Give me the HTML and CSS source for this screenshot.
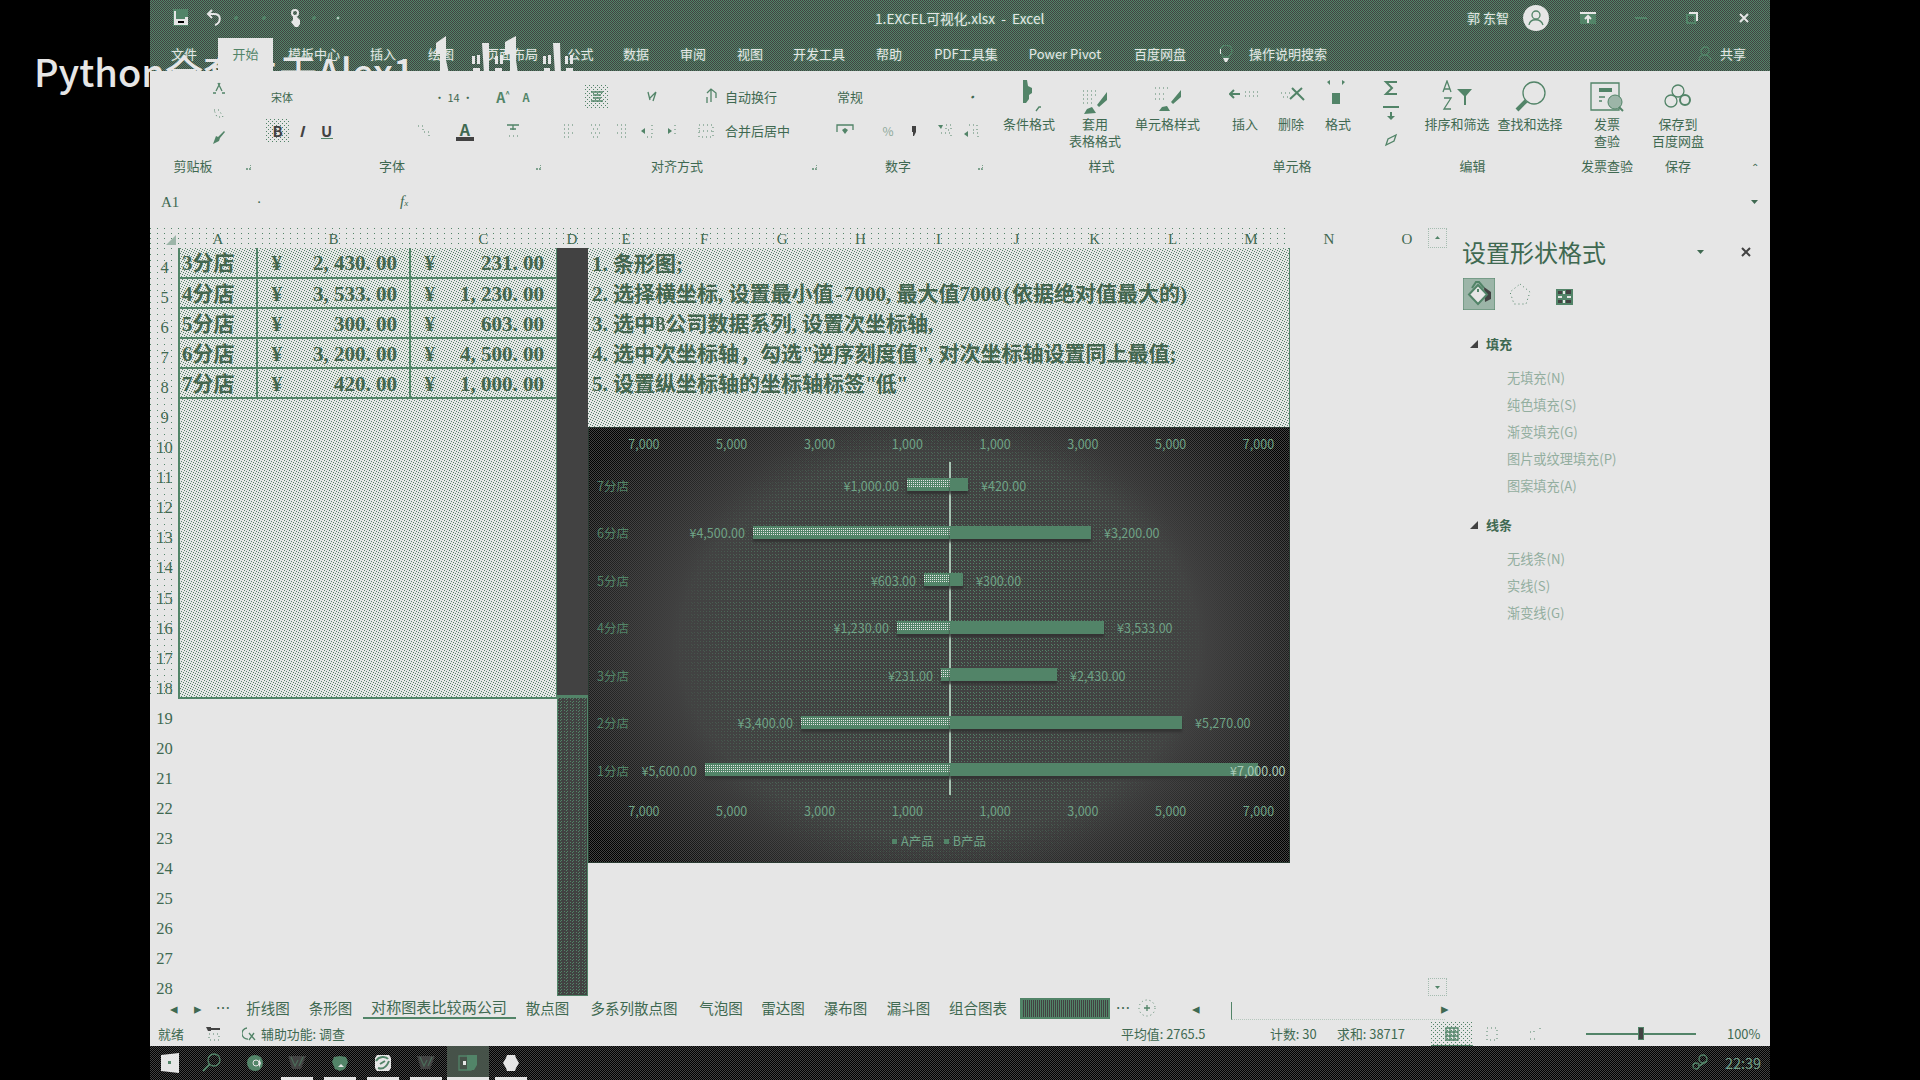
FILE: index.html
```html
<!DOCTYPE html>
<html lang="zh-CN">
<head>
<meta charset="utf-8">
<title>1.EXCEL可视化.xlsx - Excel</title>
<link rel="stylesheet" href="styles.css">
</head>
<body>
<div class="watermark">Python全套关于Alex1
<svg class="marks" width="150" height="40" viewBox="430 34 150 40"><path d="M436 43L446 36L446 60L449 74H440V54L436 55ZM482 43H489V74H484ZM505 42L516 36V60L518 74H510V54L505 55ZM553 43H560L561 74H555ZM472 56h3v8h-3zM477 55h3v9h-3zM495 56h3v8h-3zM500 55h3v9h-3zM543 56h3v8h-3zM548 55h3v9h-3zM565 56h3v8h-3zM570 55h3v9h-3zM473 68h7v6h-7zM495 68h7v6h-7zM544 68h6v6h-6zM566 68h7v6h-7z"/></svg>
</div>
<div class="app">
  <header class="titlebar">
    <div class="quick">
      <svg width="18" height="18" viewBox="0 0 18 18"><path class="g" d="M1 0h15v17H1z"/><path class="w" d="M2 2h2v8h9V8h3v8H2z"/><path class="k" d="M6 12h6v2H6z"/></svg>
      <svg width="16" height="18" viewBox="0 0 16 18"><path class="sw" d="M6 1L2 5l4 4M2 5h6c8 0 7 9 1 11"/></svg>
      <b></b><b></b>
      <svg width="14" height="18" viewBox="0 0 14 18"><circle class="sw" cx="5" cy="4" r="3"/><path class="w" d="M3 7h3l4 4v4l-2 3H5l-4-5 2-2z"/></svg>
      <b></b><b class="lit"></b>
    </div>
    <div class="doc">1.EXCEL可视化.xlsx&nbsp; -&nbsp; Excel</div>
    <div class="winbtns">
      <span class="user">郭 东智</span>
      <svg width="28" height="28" viewBox="0 0 28 28"><circle class="w" cx="14" cy="14" r="13"/><circle class="sg" cx="14" cy="11" r="4"/><path class="sg" d="M7 21c1-7 12-7 14 0"/></svg>
      <svg width="18" height="14" viewBox="0 0 18 14"><path class="g" d="M1 1h16v12H1z"/><path class="sw" d="M1 2h16M9 12V6M6 8l3-3 3 3"/></svg>
      <svg width="12" height="14" viewBox="0 0 12 14"><path class="sg2" d="M0 7h12"/></svg>
      <svg width="14" height="14" viewBox="0 0 14 14"><path class="sg2" d="M2 4h8v8H2z"/><path class="sw" d="M4 2h8v8"/></svg>
      <svg width="14" height="14" viewBox="0 0 14 14"><path class="sw" d="M3 3l8 8M11 3l-8 8"/></svg>
    </div>
  </header>
  <nav class="tabs">
    <span>文件</span><span class="on">开始</span><span>模板中心</span><span>插入</span><span>绘图</span><span>页面布局</span><span>公式</span><span>数据</span><span>审阅</span><span>视图</span><span>开发工具</span><span>帮助</span><span>PDF工具集</span><span>Power Pivot</span><span>百度网盘</span>
    <svg width="14" height="18" viewBox="0 0 14 18"><path class="sg" d="M4 12c0-3-3-3-3-6a6 6 0 0 1 12 0c0 3-3 3-3 6z"/><path class="w" d="M4 13h6l-2 4H6zM1 4h1v5H1z"/></svg>
    <span class="tell">操作说明搜索</span>
    <span class="share"><svg width="14" height="16" viewBox="0 0 14 16"><circle class="sg" cx="7" cy="5" r="4"/><path class="sg" d="M1 15c0-8 12-8 12 0"/></svg>共享</span>
  </nav>

  <section class="ribbon">
    <div class="grp clip">
      <div class="stack">
        <svg width="14" height="14" viewBox="0 0 14 14"><path class="sg" d="M6 1l4 8M8 1L4 9M1 11h3M10 11h3"/></svg>
        <svg width="12" height="10" viewBox="0 0 12 10"><path class="dotl" d="M1 1h5l4 7H4z"/></svg>
        <svg width="14" height="14" viewBox="0 0 14 14"><path class="g" d="M12 0L6 6 4 5 1 13l6-3 1-3 5-6z"/></svg>
      </div>
      <div class="cap">剪贴板</div><i class="launch"></i>
    </div>
    <div class="grp font">
      <div class="r r1"><span class="sm">宋体</span><span class="sm size">· 14 ·</span><span class="aa">A<sup>^</sup></span><span class="aa s">A</span></div>
      <div class="r r2"><span class="bold">B</span><span class="ital">I</span><span class="und">U</span>
        <svg width="14" height="14" viewBox="0 0 14 14"><path class="dotl" d="M1 2h5v6h6v5"/></svg>
        <span class="fc">A</span>
        <svg width="16" height="16" viewBox="0 0 16 16"><path class="sg" d="M2 2h12M8 2v5M5 6h6"/><path class="dotl" d="M4 13h9"/></svg></div>
      <div class="cap">字体</div><i class="launch"></i>
    </div>
    <div class="grp align">
      <div class="r r1">
        <span class="hl"><svg width="14" height="14" viewBox="0 0 14 14"><path class="sg" d="M1 2h12M3 5h8M3 8h8M1 11h12"/></svg></span>
        <svg width="14" height="14" viewBox="0 0 14 14"><path class="sg" d="M2 2l2 8M4 8l6-6M10 2l-3 9"/></svg>
        <svg width="14" height="18" viewBox="0 0 14 18"><path class="sg" d="M7 2v12M3 5l4-4 5 4v5M3 9v6"/></svg>
        <span>自动换行</span></div>
      <div class="r r2">
        <svg width="12" height="14" viewBox="0 0 12 14"><path class="dotl" d="M1 1h10M1 5h6M1 9h10M1 13h6"/></svg>
        <svg width="12" height="14" viewBox="0 0 12 14"><path class="dotl" d="M1 1h10M3 5h6M1 9h10M3 13h6"/></svg>
        <svg width="12" height="14" viewBox="0 0 12 14"><path class="dotl" d="M1 1h10M5 5h6M1 9h10M5 13h6"/></svg>
        <svg width="14" height="14" viewBox="0 0 14 14"><path class="g" d="M0 7l4-3v6z"/><path class="dotl" d="M11 1v12M6 13h6"/></svg>
        <svg width="14" height="14" viewBox="0 0 14 14"><path class="g" d="M5 7L1 4v6z"/><path class="dotl" d="M8 1v12"/></svg>
        <svg width="16" height="16" viewBox="0 0 16 16"><path class="dotl" d="M1 2h14v12H1zM1 8h14"/></svg>
        <span>合并后居中</span></div>
      <div class="cap">对齐方式</div><i class="launch"></i>
    </div>
    <div class="grp num">
      <div class="r r1"><span>常规</span><em>·</em></div>
      <div class="r r2">
        <svg width="18" height="14" viewBox="0 0 18 14"><path class="sg" d="M1 8V1h16v5"/><path class="g" d="M9 4l3 2-3 4-3-4z"/></svg>
        <span class="pct">%</span>
        <svg width="8" height="12" viewBox="0 0 8 12"><path class="d" d="M2 1h4v6l-2 4H3V7H2z"/></svg>
        <svg width="16" height="16" viewBox="0 0 16 16"><path class="g" d="M1 2h5l-2 4z"/><path class="dotl" d="M9 2h5v5H9zM4 10h10v4"/></svg>
        <svg width="16" height="16" viewBox="0 0 16 16"><path class="dotl" d="M5 2h8v5H7M9 10h5v4"/><path class="g" d="M0 11l4-3v6z"/></svg></div>
      <div class="cap">数字</div><i class="launch"></i>
    </div>
    <div class="grp style">
      <div class="r big">
        <div><svg width="32" height="34" viewBox="0 0 32 34"><path class="g" d="M10 0h4l1 6 4 2v5l-3 2v4l-3 4h-3z"/><path class="sg" d="M23 31l3-4h2"/></svg><p>条件格式</p></div>
        <div><svg width="32" height="34" viewBox="0 0 32 34"><path class="dotl" d="M4 11h16M4 15h14M4 19h12M4 23h10"/><path class="g" d="M28 12v8l-8 7-2-2zM5 34l3-5 5-2 4 6z"/></svg><p>套用<br>表格格式</p></div>
        <div><svg width="32" height="34" viewBox="0 0 32 34"><path class="dotl" d="M4 8h14M4 14h12M4 19h9"/><path class="g" d="M30 10v7l-8 7-2-2zM8 31l3-4 5-1 3 5z"/></svg><p>单元格样式</p></div>
      </div>
      <div class="cap">样式</div>
    </div>
    <div class="grp cells">
      <div class="r big">
        <div><svg width="32" height="34" viewBox="0 0 32 34"><path class="sg2" d="M1 14h10M5 10l-4 4 4 4"/><path class="dotl" d="M16 12h16M16 16h16"/></svg><p>插入</p></div>
        <div><svg width="32" height="34" viewBox="0 0 32 34"><path class="dotl" d="M6 13h10M8 17h8"/><path class="sg2" d="M17 8l12 12M27 8L15 19"/></svg><p>删除</p></div>
        <div><svg width="32" height="34" viewBox="0 0 32 34"><path class="g" d="M5 2l3-2v5zM23 2l-3-2v5zM10 13h8v11h-8z"/></svg><p>格式</p></div>
      </div>
      <div class="cap">单元格</div>
    </div>
    <div class="grp edit">
      <div class="r big">
        <div class="sum"><svg width="16" height="68" viewBox="0 0 16 68"><path class="sg2" d="M14 2H3l6 6-6 6h11M0 27h16"/><path class="g" d="M7 32h2v4h3l-4 4-4-4h3z"/><path class="sg" d="M3 65l2-6 8-4-2 6z"/></svg></div>
        <div><svg width="32" height="34" viewBox="0 0 32 34"><path class="sg" d="M2 12L6 1l4 11M3 9h6M3 18h7L3 29h7"/><path class="g" d="M16 9h15l-6 7v9h-2v-9z"/></svg><p>排序和筛选</p></div>
        <div><svg width="32" height="34" viewBox="0 0 32 34"><circle class="sg" cx="20" cy="13" r="11"/><path class="sg3" d="M12 21L3 30"/></svg><p>查找和选择</p></div>
      </div>
      <div class="cap">编辑</div>
    </div>
    <div class="grp inv">
      <div class="r big"><div><svg width="34" height="34" viewBox="0 0 34 34"><path class="sg" d="M1 3h28v27H1z"/><path class="g" d="M9 8h13v4H9z"/><path class="sg" d="M9 17h6M9 21h3"/><circle class="gl" cx="25" cy="22" r="7"/><path class="sg2" d="M29 27l4 4"/></svg><p>发票<br>查验</p></div></div>
      <div class="cap">发票查验</div>
    </div>
    <div class="grp save">
      <div class="r big"><div><svg width="32" height="34" viewBox="0 0 32 34"><circle class="sg" cx="16" cy="11" r="6"/><circle class="sg" cx="9" cy="21" r="6"/><circle class="sg2" cx="23" cy="20" r="5"/></svg><p>保存到<br>百度网盘</p></div></div>
      <div class="cap">保存</div>
    </div>
    <div class="collapse">⌃</div>
  </section>

  <section class="formula"><span class="ref">A1</span><em>·</em><span class="fx">f<small>x</small></span><i class="caret"></i></section>

  <main class="work">
    <div class="sheet">
      <div class="cols"><span class="all"></span><span>A</span><span>B</span><span>C</span><span>D</span><span>E</span><span>F</span><span>G</span><span>H</span><span>I</span><span>J</span><span>K</span><span>L</span><span>M</span><span>N</span><span>O</span></div>
      <div class="body">
        <div class="nums"><span>4</span><span>5</span><span>6</span><span>7</span><span>8</span><span>9</span><span>10</span><span>11</span><span>12</span><span>13</span><span>14</span><span>15</span><span>16</span><span>17</span><span>18</span><span>19</span><span>20</span><span>21</span><span>22</span><span>23</span><span>24</span><span>25</span><span>26</span><span>27</span><span>28</span></div>
        <div class="sel">
          <div class="row"><span>3分店</span><span><b>¥</b>2<i>,</i>430<i>.</i>00</span><span><b>¥</b>231<i>.</i>00</span></div>
          <div class="row"><span>4分店</span><span><b>¥</b>3<i>,</i>533<i>.</i>00</span><span><b>¥</b>1<i>,</i>230<i>.</i>00</span></div>
          <div class="row"><span>5分店</span><span><b>¥</b>300<i>.</i>00</span><span><b>¥</b>603<i>.</i>00</span></div>
          <div class="row"><span>6分店</span><span><b>¥</b>3<i>,</i>200<i>.</i>00</span><span><b>¥</b>4<i>,</i>500<i>.</i>00</span></div>
          <div class="row"><span>7分店</span><span><b>¥</b>420<i>.</i>00</span><span><b>¥</b>1<i>,</i>000<i>.</i>00</span></div>
        </div>
        <div class="dcol"><div></div><div></div></div>
        <div class="right">
          <div class="notes">
            <p>1<i>.</i>条形图<i>;</i></p>
            <p>2<i>.</i>选择横坐标<i>,</i>设置最小值<i class="c">-</i>7000<i>,</i>最大值7000<i class="c">(</i>依据绝对值最大的<i>)</i></p>
            <p>3<i>.</i>选中<i class="n">B</i>公司数据系列<i>,</i>设置次坐标轴<i>,</i></p>
            <p>4<i>.</i>选中次坐标轴，勾选<i>"</i>逆序刻度值<i>"</i><i>,</i>对次坐标轴设置同上最值<i>;</i></p>
            <p>5<i>.</i>设置纵坐标轴的坐标轴标签<i>"</i>低<i>"</i></p>
          </div>
          <div class="chart">
            <div class="axis"><span>7,000</span><span>5,000</span><span>3,000</span><span>1,000</span><span>1,000</span><span>3,000</span><span>5,000</span><span>7,000</span></div>
            <div class="plot">
              <div class="bar"><span>7分店</span><div class="neg">¥1,000.00<u style="width:43px"></u></div><div class="pos"><u style="width:18px"></u>¥420.00</div></div>
              <div class="bar"><span>6分店</span><div class="neg">¥4,500.00<u style="width:197px"></u></div><div class="pos"><u style="width:141px"></u>¥3,200.00</div></div>
              <div class="bar"><span>5分店</span><div class="neg">¥603.00<u style="width:26px"></u></div><div class="pos"><u style="width:13px"></u>¥300.00</div></div>
              <div class="bar"><span>4分店</span><div class="neg">¥1,230.00<u style="width:53px"></u></div><div class="pos"><u style="width:154px"></u>¥3,533.00</div></div>
              <div class="bar"><span>3分店</span><div class="neg">¥231.00<u style="width:9px"></u></div><div class="pos"><u style="width:107px"></u>¥2,430.00</div></div>
              <div class="bar"><span>2分店</span><div class="neg">¥3,400.00<u style="width:149px"></u></div><div class="pos"><u style="width:232px"></u>¥5,270.00</div></div>
              <div class="bar"><span>1分店</span><div class="neg">¥5,600.00<u style="width:245px"></u></div><div class="pos over"><u style="width:308px"></u>¥7,000.00</div></div>
            </div>
            <div class="axis"><span>7,000</span><span>5,000</span><span>3,000</span><span>1,000</span><span>1,000</span><span>3,000</span><span>5,000</span><span>7,000</span></div>
            <div class="legend"><span>A产品</span><span>B产品</span></div>
          </div>
        </div>
      </div>
    </div>
    <div class="vscroll"><span class="up"></span><span class="down"></span></div>
    <aside class="pane">
      <h2>设置形状格式<i class="caret"></i><svg width="12" height="12" viewBox="0 0 12 12"><path class="sd" d="M2 2l8 8M10 2l-8 8"/></svg></h2>
      <div class="kinds">
        <svg width="32" height="32" viewBox="0 0 32 32"><path class="gl" d="M0 0h32v32H0z"/><path class="d" d="M21 9l7 5v7l-6 3z"/><path class="wg" d="M15 7l9 9.500-9 9.500-9-9.500z"/><path class="sg2" d="M9 10l4-6h3l5 6"/><path class="g" d="M14 11h2v3h-2z"/></svg>
        <svg width="24" height="24" viewBox="0 0 24 24"><path class="dotl" d="M12 2l10 8-4 12H6L2 10z"/></svg>
        <svg width="20" height="20" viewBox="0 0 20 20"><path class="g" d="M2 3h17v16H2z"/><path class="d" d="M4 5h4v3H4zM12 4h5v4h-5zM4 14h4v3H4zM12 14h5v3h-5z"/><path class="w" d="M9 5h2v3H9zM9 14h2v3H9zM4 10h4v2H4zM13 10h4v2h-4z"/></svg>
      </div>
      <h3>填充</h3>
      <ul><li>无填充(N)</li><li>纯色填充(S)</li><li>渐变填充(G)</li><li>图片或纹理填充(P)</li><li>图案填充(A)</li></ul>
      <h3>线条</h3>
      <ul><li>无线条(N)</li><li>实线(S)</li><li>渐变线(G)</li></ul>
    </aside>
  </main>

  <nav class="sheets">
    <span>◂</span><span>▸</span><span>…</span><span>折线图</span><span>条形图</span><span class="cur">对称图表比较两公司</span><span>散点图</span><span>多系列散点图</span><span>气泡图</span><span>雷达图</span><span>瀑布图</span><span>漏斗图</span><span>组合图表</span><span class="dark"></span><span>…</span>
    <svg width="18" height="18" viewBox="0 0 18 18"><circle class="dotl" cx="9" cy="9" r="8"/><path class="sg" d="M9 6v6M6 9h6"/></svg>
    <span>◂</span><span class="track"></span><span>▸</span>
  </nav>
  <footer class="status">
    <span>就绪</span>
    <svg width="16" height="16" viewBox="0 0 16 16"><path class="d" d="M1 1h5v4H3zM6 2h9v2H6z"/><path class="dotl" d="M4 8h10v6H4z"/></svg>
    <span class="acc"><svg width="14" height="14" viewBox="0 0 14 14"><path class="sg" d="M5 1a5 5 0 0 0 1 11M7 6l6 7M12 6l-5 7"/></svg>辅助功能: 调查</span>
    <span>平均值: 2765.5</span><span>计数: 30</span><span>求和: 38717</span>
    <span class="view"><svg width="14" height="14" viewBox="0 0 14 14"><path class="sg" d="M1 1h12v12H1zM1 5h12M1 9h12M5 1v12M9 1v12"/></svg></span>
    <svg width="12" height="14" viewBox="0 0 12 14"><path class="dotl" d="M1 1h10v12H1z"/></svg>
    <svg width="12" height="14" viewBox="0 0 12 14"><path class="dotl" d="M1 5h4V1M11 1v4M1 12h5"/></svg>
    <span class="slider"><b></b></span>
    <span>100%</span>
  </footer>
  <footer class="task">
    <span><svg width="20" height="20" viewBox="0 0 20 20"><path class="w" d="M1 2l18-2v20L1 18z"/><path class="g" d="M8 8h3v3H8z"/></svg></span>
    <span><svg width="20" height="20" viewBox="0 0 20 20"><circle class="sg" cx="12" cy="7" r="6"/><path class="sg2" d="M8 11l-7 7"/></svg></span>
    <span><svg width="18" height="18" viewBox="0 0 18 18"><circle class="g" cx="9" cy="9" r="8"/><circle class="sw thin" cx="10" cy="9" r="3"/><path class="w" d="M13 5l2 4-2 5z"/></svg></span>
    <span class="run"><svg width="18" height="16" viewBox="0 0 18 16"><path class="d" d="M0 1h18l-5 13H4z"/><path class="sg dim" d="M3 2l4 9 3-6M11 11l4-9"/></svg></span>
    <span class="run"><svg width="18" height="18" viewBox="0 0 18 18"><path class="g" d="M3 3l6-1 6 1 2 5-3 7-5 2-5-2-3-7z"/><path class="w" d="M7 13l3-3 3 3z"/></svg></span>
    <span class="run"><svg width="18" height="18" viewBox="0 0 18 18"><path class="w" d="M3 1h12l2 3v10l-2 3H3l-2-3V4z"/><path class="sg2" d="M2 7c3-5 10-5 12-2M4 14c6 2 9-2 11-7M6 10l5-3"/></svg></span>
    <span class="run"><svg width="18" height="16" viewBox="0 0 18 16"><path class="d" d="M0 1h18l-5 13H4z"/><path class="sg dim" d="M3 2l4 9 3-6M11 11l4-9"/></svg></span>
    <span class="run act"><svg width="20" height="18" viewBox="0 0 20 18"><path class="sg" d="M1 2h12v14H1z"/><path class="g" d="M9 1h10v10l-3 5H9z"/><path class="w" d="M5 7h3v4H5z"/></svg></span>
    <span class="run"><svg width="18" height="18" viewBox="0 0 18 18"><path class="w" d="M5 1h8l1 3 3 5-3 5-1 3H5l-1-3-3-5 3-5z"/></svg></span>
    <svg class="tray" width="18" height="18" viewBox="0 0 18 18"><circle class="sg" cx="5" cy="12" r="3"/><circle class="sg" cx="12" cy="5" r="4"/><path class="sg2" d="M8 12l8-5"/></svg>
    <time>22:39</time>
  </footer>
</div>
</body>
</html>
```

FILE: styles.css
```css
:root {
  --paper: #e6e6e6;
  --green: #528468;
  --ink: #424242;
  --text: #3f6951;
  --dot: conic-gradient(at 1px 1px, transparent 75%, #528468 0);
}
* { box-sizing: border-box; }
body {
  margin: 0; width: 1920px; height: 1080px; overflow: hidden; position: relative;
  background: #000; color: var(--text);
  font: 13px/16px "Noto Sans CJK SC", sans-serif;
}
svg { display: block; flex: none; fill: none; }
p, h2, h3, ul { margin: 0; padding: 0; }
.g { fill: var(--green); }
.gl { fill: #9cb5a8; stroke: var(--green); }
.w { fill: var(--paper); }
.wg { fill: var(--paper); stroke: var(--green); stroke-width: 2; }
.d { fill: var(--ink); }
.k { fill: #000; }
.sg { stroke: var(--green); stroke-width: 1.3; }
.sg2 { stroke: var(--green); stroke-width: 2; }
.sg3 { stroke: var(--green); stroke-width: 4; }
.sd { stroke: var(--ink); stroke-width: 2; }
.sw { stroke: var(--paper); stroke-width: 2; }
.thin { stroke-width: 1; }
.dim { opacity: .6; }
.dotl { stroke: var(--green); stroke-width: 1; stroke-dasharray: 1 3; }

.watermark {
  position: absolute; left: 34px; top: 44px; z-index: 1; white-space: nowrap;
  color: var(--paper); font-size: 38px; line-height: 54px; font-weight: 500;
}
.marks { position: absolute; left: 396px; top: -10px; fill: var(--paper); }

.app { width: 1620px; height: 1080px; margin-left: 150px; display: flex; flex-direction: column; background: var(--paper); }

/* title bar and tabs */
.titlebar, .tabs {
  background: conic-gradient(#528468 25%, #424242 0 50%, #528468 0 75%, #424242 0) 0 0 / 2px 2px;
  color: var(--paper);
}
.titlebar { height: 36px; display: grid; grid-template-columns: 620px 381px 1fr; align-items: center; }
.quick { display: grid; grid-template-columns: 34px 28px 28px 28px 22px 24px 10px; padding-left: 22px; align-items: center; }
.quick b { width: 4px; height: 4px; border-radius: 3px; background: var(--green); }
.quick b.lit { background: var(--paper); border: 1px solid var(--green); }
.doc { padding-left: 105px; white-space: nowrap; font-size: 13.7px; }
.doc, .user, .tell { text-shadow: 0 0 2px var(--green), 0 0 2px var(--green), 0 0 3px var(--green); }
.winbtns { display: grid; grid-template-columns: 66px 30px 74px 32px 70px 34px; padding-left: 304px; justify-items: center; align-items: center; }
.tabs { height: 35px; display: grid; align-items: center; justify-items: center; grid-template-columns: 68px 55px 82px 56px 60px 82px 55px 56px 58px 56px 82px 58px 96px 102px 88px 44px 80px 1fr; }
.tabs span { white-space: nowrap; text-shadow: 0 0 3px var(--green), 0 0 2px var(--green); }
.tabs .on { background: var(--paper); color: var(--green); width: 55px; height: 33px; align-self: end; text-align: center; line-height: 32px; text-shadow: none; position: relative; z-index: 2; }
.tabs .share { justify-self: end; display: flex; gap: 8px; padding-right: 24px; align-items: center; }

/* ribbon */
.ribbon { height: 114px; display: flex; position: relative; z-index: 2; background: var(--paper); }
.grp { height: 114px; display: grid; grid-template-rows: 9px 34px 34px 9px 20px; position: relative; white-space: nowrap; }
.grp .r { display: grid; align-items: center; justify-items: center; }
.grp .r1 { grid-row: 2; }
.grp .r2 { grid-row: 3; }
.cap { grid-row: 5; text-align: center; line-height: 17px; }
.launch { position: absolute; right: 7px; bottom: 15px; width: 5px; height: 5px; border-right: 1px dotted var(--green); border-bottom: 2px dotted var(--green); opacity: .7; }
.clip { width: 108px; }
.clip .cap { padding-right: 22px; }
.stack { grid-row: 2 / 5; display: grid; align-content: space-between; justify-items: center; padding: 2px 0 12px 30px; }
.font { width: 290px; }
.font .cap { padding-right: 22px; }
.font .r1 { grid-template-columns: 176px 56px 26px 30px; }
.font .r1 .sm:first-child { justify-self: start; padding-left: 13px; }
.font .r1 .size { justify-self: start; padding-left: 0; }
.sm { font-size: 11px; }
.aa { font-size: 14px; font-weight: 700; color: var(--green); }
.aa sup { font-size: 8px; line-height: 0; }
.aa.s { font-size: 11px; margin-right: 10px; }
.grp.font .r2 { display: flex; padding-left: 8px; }
.bold, .ital, .und { font-weight: 700; font-size: 15px; color: var(--ink); }
.bold { width: 23px; height: 24px; line-height: 24px; text-align: center; background: var(--dot) 0 0 / 4px 4px, var(--dot) 2px 2px / 4px 4px; }
.ital { font-style: italic; margin-left: 10px; width: 6px; }
.und { margin-left: 16px; width: 12px; border-bottom: 1px solid var(--green); line-height: 15px; }
.font .r2 svg:nth-of-type(1) { margin-left: 84px; }
.fc { margin-left: 25px; width: 18px; text-align: center; font-size: 16px; line-height: 15px; font-weight: 700; border-bottom: 4px solid var(--ink); }
.font .r2 svg:nth-of-type(2) { margin-left: 31px; }
.align { width: 276px; }
.align .cap, .num .cap { padding-right: 18px; }
.align .r1 { grid-template-columns: 98px 14px 58px 1fr; }
.align .r1 span:last-child, .align .r2 span { justify-self: start; }
.align .r1 svg:nth-of-type(2) { justify-self: end; }
.align .r1 > span:last-child { margin-left: 7px; }
.hl { width: 24px; height: 24px; display: grid; place-items: center; background: var(--dot) 0 0 / 4px 4px, var(--dot) 2px 2px / 4px 4px; }
.align .r2 { grid-template-columns: 26px 27px 26px 26px 26px 38px 1fr; padding-left: 8px; }
.num { width: 166px; }
.num .r1 { grid-template-columns: 52px 1fr; }
.num .r1 em { justify-self: end; margin-right: 12px; }
.num .r2 { grid-template-columns: 42px 44px 8px 54px 0; }
.pct { font-size: 12px; color: #8faa9c; }
.grp .big { grid-row: 2 / 5; align-items: start; text-align: center; }
.big svg { margin: 0 auto; }
.big p { line-height: 17px; margin-top: 1px; }
.style { width: 223px; }
.style .big { grid-template-columns: 78px 54px 91px; }
.cells { width: 156px; }
.cells .big { grid-template-columns: 64px 28px 66px; }
.cells p, .edit p { margin-left: -10px; margin-right: -10px; }
.edit { width: 203px; }
.edit .big { grid-template-columns: 44px 88px 58px; }
.edit .cap { padding-left: 4px; }
.inv { width: 70px; }
.save { width: 72px; }
.collapse { margin-left: auto; padding: 88px 11px 0 0; font-size: 10px; }

.formula { height: 43px; padding: 8px 10px 0 11px; display: grid; grid-template-columns: 96px 143px 1fr 9px; align-items: center; align-content: start; font: 15px/16px "Liberation Serif", serif; }
.fx { font-style: italic; }
.fx small { font-size: 9px; }
.caret { width: 7px; height: 4px; background: var(--text); clip-path: polygon(0 0, 100% 0, 50% 100%); }

/* worksheet */
.work { height: 768px; display: flex; }
.sheet { width: 1275px; overflow: hidden; }
.cols { width: 1295px; height: 20px; display: grid; grid-template-columns: 29px 78px 153px 147px 30px repeat(11, 78.1px); text-align: center; font: 15px/22px "Liberation Serif", serif; background: linear-gradient(to right, transparent 1140px, var(--paper) 0), var(--dot) 0 0 / 7px 5px; }
.all { width: 10px; height: 10px; margin: 7px 0 0 16px; background: #9cb5a8; clip-path: polygon(100% 0, 100% 100%, 0 100%); }
.body { height: 748px; display: flex; }
.nums { width: 28px; display: grid; grid-auto-rows: 30.05px; height: 748px; overflow: hidden; text-align: center; font: 16.5px/40px "Liberation Serif", serif; }
.nums span { padding-left: 1px; height: 30px; }
.nums span:nth-child(-n+15) { background: var(--dot) 0 0 / 7px 6px; }
.sel { width: 380px; height: 451px; border: 2px solid var(--green); border-top: 0; }
.sel, .notes {
  background: var(--dot) 0 0 / 5px 5px, var(--dot) 2px 1px / 5px 5px, var(--dot) 4px 2px / 5px 5px, var(--dot) 1px 3px / 5px 5px, var(--dot) 3px 4px / 5px 5px;
  font: bold 21px/30px "Liberation Serif", "Noto Sans CJK SC", serif; color: #44664f;
}
.row { height: 30.05px; display: grid; grid-template-columns: 78px 153px 1fr; border-bottom: 2px solid var(--green); line-height: 31px; overflow: hidden; }
.row:first-child { height: 31px; }
.row span { text-align: right; border-right: 2px solid var(--green); padding-right: 12px; white-space: nowrap; }
.row span:last-child { border: 0; }
.row span:first-child { text-align: left; padding-left: 2px; }
.row b { float: left; margin-left: 13px; width: 11px; }
.row i, .notes i { display: inline-block; width: 10.5px; font-style: normal; text-align: left; }
.notes .c { text-align: center; }
.notes .n { transform: scaleX(.74); transform-origin: left; }
.dcol { width: 31px; margin-left: -1px; }
.dcol div:first-child { height: 449px; background: var(--ink); border-bottom: 2px solid var(--green); }
.dcol div:last-child { height: 299px; border: 1px solid var(--green); background: var(--dot) 0 0 / 3px 3px, var(--dot) 2px 1px / 6px 3px, var(--ink); }
.right { width: 702px; }
.notes { height: 179px; padding-left: 4px; padding-top: 1px; border-right: 1px solid var(--green); white-space: nowrap; }
.notes p { height: 30px; }

/* chart */
.chart { height: 436px; width: 702px; background: var(--ink); border: 1px solid #2a3a31; position: relative; font-size: 12.5px; line-height: 14px; color: #6fa386; isolation: isolate; overflow: hidden; }
.chart::before, .chart::after { content: ""; position: absolute; inset: 0; z-index: -1; }
.chart::before { background: var(--dot) 0 0 / 3px 3px, var(--dot) 1px 1px / 6px 6px; mask-image: radial-gradient(ellipse 270px 240px at 50% 50%, #000 40%, rgba(0,0,0,.6) 80%, transparent); }
.chart::after { background: conic-gradient(#000 25%, transparent 0 50%, #000 0 75%, transparent 0) 0 0 / 2px 2px; mask-image: radial-gradient(ellipse 450px 330px at 50% 50%, transparent 58%, #000 95%); }
.axis { height: 34px; padding-left: 11px; display: grid; grid-template-columns: repeat(8, 87.8px); text-align: center; line-height: 32px; }
.plot { height: 333px; background: linear-gradient(to right, transparent 360px, #a8c4b4 360px, #a8c4b4 362px, transparent 0); }
.bar { height: 47.5px; display: grid; grid-template-columns: 60px 301px 1fr; align-items: center; }
.bar > span { padding-left: 8px; color: #528468; }
.neg, .pos { display: flex; align-items: center; white-space: nowrap; }
.neg { justify-content: flex-end; gap: 8px; }
.pos { gap: 13px; }
.neg u, .pos u { flex: none; height: 13px; margin-top: -2px; background: var(--green); box-shadow: 0 3px 2px #333; }
.neg u { background: conic-gradient(at 1px 1px, transparent 75%, #e6e6e6 0) 0 2px / 2px 2px, var(--green); background-clip: content-box, border-box; padding-bottom: 3px; padding-top: 1px; }
.pos.over { gap: 0; color: #a9cbb7; }
.pos.over u { margin-right: -28px; }
.legend { display: flex; gap: 10px; justify-content: center; padding-top: 5px; }
.legend span::before { content: ""; display: inline-block; width: 5px; height: 5px; margin-right: 4px; background: var(--green); vertical-align: 2px; }

.vscroll { width: 22px; display: flex; flex-direction: column; justify-content: space-between; padding-left: 3px; }
.vscroll span { width: 19px; height: 20px; border: 1px dotted #a5bcb0; }
.vscroll .down { height: 18px; }
.vscroll span::before { content: ""; display: block; width: 5px; height: 3px; margin: 7px auto; background: var(--green); clip-path: polygon(50% 0, 100% 100%, 0 100%); }
.vscroll .down::before { transform: scaleY(-1); }

/* format pane */
.pane { flex: 1; padding-left: 15px; }
.pane h2 { height: 48px; display: grid; grid-template-columns: 235px 43px 12px; align-items: center; font-size: 24px; line-height: 46px; font-weight: 400; }
.pane h2 .caret { display: block; }
.kinds { height: 35px; display: flex; align-items: center; gap: 13px; padding-left: 1px; }
.kinds svg:last-child { margin: 5px 0 0 9px; }
.pane h3 { font-size: 13px; line-height: 20px; padding-left: 24px; margin-top: 23px; position: relative; }
.pane h3::before { content: ""; position: absolute; left: 8px; top: 6px; width: 8px; height: 8px; background: var(--ink); clip-path: polygon(100% 0, 100% 100%, 0 100%); }
.pane ul { list-style: none; padding: 10px 0 0 45px; line-height: 27px; color: #93ae9f; font-size: 13.2px; }
.pane ul + h3 { margin-top: 16px; }

/* sheet tabs, status bar, taskbar */
.sheets { height: 26px; display: grid; grid-template-columns: 22px 25px 26px 64px 61px 156px 61px 112px 62px 62px 63px 63px 76px 97px 20px 28px 70px 214px 0; padding: 0 0 9px 13px; justify-items: center; align-items: center; white-space: nowrap; font-size: 14.5px; line-height: 20px; }
.cur { width: 153px; text-align: center; border-bottom: 2px solid var(--green); font-size: 15.1px; align-self: start; height: 23px; }
.dark { width: 90px; height: 21px; align-self: start; margin-top: 2px; border: 2px solid var(--green); background: repeating-linear-gradient(to right, #528468 0 1px, #424242 1px 2px); }
.track { width: 214px; height: 18px; margin-top: 6px; border-left: 1px solid var(--green); border-bottom: 1px dotted #b5c7bd; }
.status { height: 24px; display: grid; align-items: center; padding: 0 0 1px 8px; grid-template-columns: 47px 37px 879px 149px 67px 94px 55px 43px 57px 141px 34px; white-space: nowrap; font-size: 12.9px; }
.acc { display: flex; align-items: center; gap: 5px; }
.view { width: 42px; height: 24px; display: grid; place-items: center; background: var(--dot) 0 0 / 4px 4px, var(--dot) 2px 2px / 4px 4px; border-bottom: 1px solid var(--green); }
.slider { width: 110px; height: 2px; background: var(--green); }
.slider b { display: block; width: 6px; height: 13px; margin: -6px auto 0; background: var(--ink); border: 1px solid var(--green); }
.task { height: 34px; display: flex; background: conic-gradient(#000 25%, #424242 0 50%, #000 0 75%, #424242 0) 0 0 / 2px 2px; }
.task span { width: 43px; height: 34px; display: grid; place-items: center; }
.task span:first-child { width: 40px; }
.task .run { width: 32px; margin: 0 5.4px; border-bottom: 3px solid var(--paper); border-top: 3px solid transparent; }
.task .act { width: 42px; margin: 0; background: #465249; }
.tray { margin: 8px 0 0 1159px; }
time { margin: 9px 0 0 16px; color: #73a088; font-size: 14.5px; }
```
